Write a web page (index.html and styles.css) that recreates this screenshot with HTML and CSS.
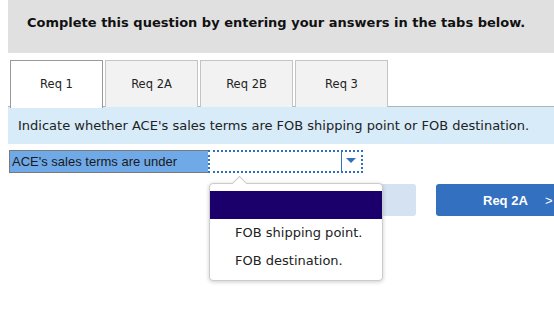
FILE: index.html
```html
<!DOCTYPE html>
<html lang="en">
<head>
    <meta charset="UTF-8">
    <meta name="viewport" content="width=device-width, initial-scale=1.0">
    <title>Req 1</title>
    <link rel="stylesheet" href="styles.css">
</head>
<body>

<div class="page">
    <div class="intro">Complete this question by entering your answers in the tabs below.</div>

    <ul class="tabs">
        <li class="tab active">Req 1</li>
        <li class="tab">Req 2A</li>
        <li class="tab">Req 2B</li>
        <li class="tab">Req 3</li>
    </ul>

    <div class="instruction">Indicate whether ACE's sales terms are FOB shipping point or FOB destination.</div>

    <div class="answer-row">
        <div class="answer-label">ACE's sales terms are under</div>
        <div class="answer-select">
            <span class="select-value"></span>
            <span class="select-arrow"></span>
        </div>
    </div>

    <div class="nav-buttons">
        <button class="btn-prev">&lt; Req 1</button>
        <button class="btn-next">Req 2A <span class="chev">&gt;</span></button>
    </div>

    <!-- открытый список -->
    <div class="dropdown">
        <div class="option selected"></div>
        <div class="option">FOB shipping point.</div>
        <div class="option">FOB destination.</div>
    </div>
</div>

</body>
</html>
```

FILE: styles.css
```css
* {
    margin: 0;
    padding: 0;
    box-sizing: border-box;
}

body {
    font-family: 'DejaVu Sans', Verdana, sans-serif;
    background: #fff;
    color: #222;
    overflow: hidden;
}

.page {
    position: relative;
    margin-left: 8px;
    width: 560px;
    height: 325px;
}

.intro {
    background-color: #e0e0e0;
    height: 53px;
    padding: 14px 0 0 19px;
    font-size: 13px;
    font-weight: bold;
    line-height: 18px;
    color: #111;
}

.tabs {
    list-style: none;
    display: flex;
    gap: 2px;
    margin-top: 7px;
    padding-left: 2px;
    border-bottom: 1px solid #b4b4b4;
    height: 47px;
}

.tab {
    width: 93px;
    height: 47px;
    border: 1px solid #c4c4c4;
    border-bottom: none;
    background-color: #f2f2f2;
    font-size: 11.5px;
    line-height: 47px;
    text-align: center;
    color: #222;
}

.tab.active {
    background-color: #fff;
    border-color: #999;
    height: 48px;
}

.instruction {
    background-color: #d7ebf9;
    height: 37px;
    padding-left: 10px;
    font-size: 13px;
    line-height: 37px;
    color: #222;
}

.answer-row {
    display: flex;
    margin-top: 6px;
    height: 23px;
}

.answer-label {
    width: 199px;
    margin-left: 1px;
    background-color: #70a9e7;
    border: 1px solid #7a7a7a;
    border-right: none;
    font-family: 'Liberation Sans', Arial, sans-serif;
    font-size: 13px;
    line-height: 21px;
    padding-left: 2px;
    color: #1a1a1a;
}

.answer-select {
    display: flex;
    width: 155px;
    border: 2px dotted #3070c4;
    background-color: #fff;
}

.select-value {
    flex: 1;
    border-right: 1px solid #3070c4;
}

.select-arrow {
    width: 19px;
    position: relative;
}

.select-arrow::after {
    content: "";
    position: absolute;
    left: 4px;
    top: 6px;
    border-left: 5px solid transparent;
    border-right: 5px solid transparent;
    border-top: 5px solid #3070c4;
}

.nav-buttons {
    display: flex;
    margin-top: 11px;
    padding-left: 288px;
    gap: 20px;
}

.nav-buttons button {
    height: 32px;
    width: 120px;
    border: none;
    border-radius: 3px;
    font-family: 'Liberation Sans', Arial, sans-serif;
    font-size: 13px;
    font-weight: bold;
}

.btn-prev {
    background-color: #d4e2f2;
    color: #fff;
}

.btn-next {
    background-color: #3371c0;
    color: #fff;
    text-align: left;
    padding-left: 47px;
    width: 124px !important;
}

.chev {
    font-weight: normal;
    margin-left: 14px;
}

.dropdown {
    position: absolute;
    left: 201px;
    top: 183px;
    width: 174px;
    height: 98px;
    background-color: #fff;
    border: 1px solid #ccc;
    border-radius: 4px;
    box-shadow: 0 1px 4px rgba(0, 0, 0, 0.2);
    padding-top: 7px;
}

.dropdown::before {
    content: "";
    position: absolute;
    left: 24px;
    top: -6px;
    width: 10px;
    height: 10px;
    background-color: #fff;
    border-left: 1px solid #ccc;
    border-top: 1px solid #ccc;
    transform: rotate(45deg);
}

.option {
    height: 28px;
    padding-left: 25px;
    font-size: 13px;
    line-height: 28px;
    color: #222;
    position: relative;
}

.option.selected {
    background-color: #1b006b;
}
```
